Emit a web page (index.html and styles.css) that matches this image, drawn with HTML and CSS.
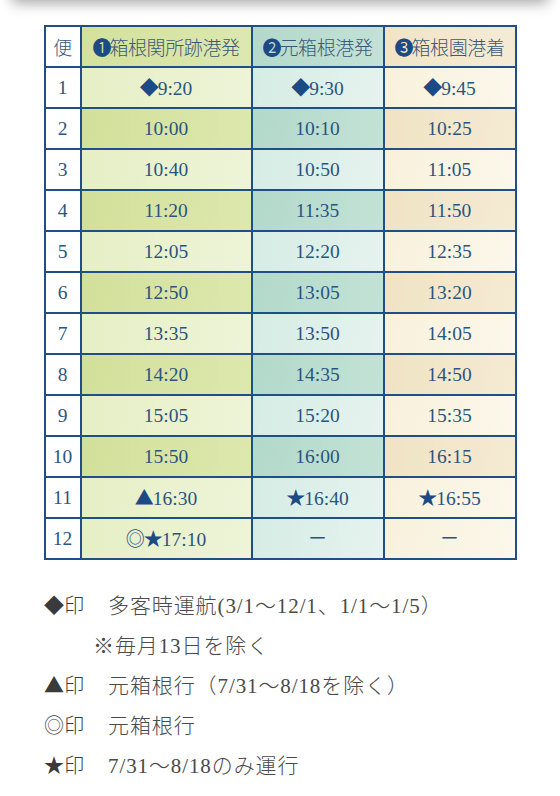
FILE: index.html
```html
<!DOCTYPE html>
<html lang="ja">
<head>
<meta charset="utf-8">
<title>時刻表</title>
<link rel="stylesheet" href="styles.css">
</head>
<body>
<div class="topshade"></div>
<main class="page">
  <table class="timetable">
    <colgroup>
      <col class="c-no"><col class="c-a"><col class="c-b"><col class="c-c">
    </colgroup>
    <thead>
      <tr>
        <th class="no">便</th>
        <th class="a"><span class="num">❶</span>箱根関所跡港発</th>
        <th class="b"><span class="num">❷</span>元箱根港発</th>
        <th class="c"><span class="num">❸</span>箱根園港着</th>
      </tr>
    </thead>
    <tbody>
      <tr class="odd"><td class="no">1</td><td class="a"><span class="sym">◆</span>9:20</td><td class="b"><span class="sym">◆</span>9:30</td><td class="c"><span class="sym">◆</span>9:45</td></tr>
      <tr class="even"><td class="no">2</td><td class="a">10:00</td><td class="b">10:10</td><td class="c">10:25</td></tr>
      <tr class="odd"><td class="no">3</td><td class="a">10:40</td><td class="b">10:50</td><td class="c">11:05</td></tr>
      <tr class="even"><td class="no">4</td><td class="a">11:20</td><td class="b">11:35</td><td class="c">11:50</td></tr>
      <tr class="odd"><td class="no">5</td><td class="a">12:05</td><td class="b">12:20</td><td class="c">12:35</td></tr>
      <tr class="even"><td class="no">6</td><td class="a">12:50</td><td class="b">13:05</td><td class="c">13:20</td></tr>
      <tr class="odd"><td class="no">7</td><td class="a">13:35</td><td class="b">13:50</td><td class="c">14:05</td></tr>
      <tr class="even"><td class="no">8</td><td class="a">14:20</td><td class="b">14:35</td><td class="c">14:50</td></tr>
      <tr class="odd"><td class="no">9</td><td class="a">15:05</td><td class="b">15:20</td><td class="c">15:35</td></tr>
      <tr class="even"><td class="no">10</td><td class="a">15:50</td><td class="b">16:00</td><td class="c">16:15</td></tr>
      <tr class="odd"><td class="no">11</td><td class="a"><span class="sym">▲</span>16:30</td><td class="b"><span class="sym">★</span>16:40</td><td class="c"><span class="sym">★</span>16:55</td></tr>
      <tr class="odd"><td class="no">12</td><td class="a"><span class="sym">◎★</span>17:10</td><td class="b"><span class="dash">ー</span></td><td class="c"><span class="dash">ー</span></td></tr>
    </tbody>
  </table>

  <ul class="notes">
    <li class="note"><span class="mark">◆印</span><span class="desc">多客時運航(3/1～12/1、1/1～1/5）</span></li>
    <li class="note sub"><span class="desc">※毎月13日を除く</span></li>
    <li class="note"><span class="mark">▲印</span><span class="desc">元箱根行（7/31～8/18を除く）</span></li>
    <li class="note"><span class="mark">◎印</span><span class="desc">元箱根行</span></li>
    <li class="note"><span class="mark">★印</span><span class="desc">7/31～8/18のみ運行</span></li>
  </ul>
</main>
</body>
</html>
```

FILE: styles.css
```css
html, body {
  margin: 0;
  padding: 0;
  background: #ffffff;
}

body {
  font-family: "Liberation Serif", "Noto Sans CJK JP", serif;
  color: #444444;
}

.topshade {
  position: fixed;
  top: -24px;
  left: 12px;
  right: 12px;
  height: 24px;
  box-shadow: 0 3px 14px rgba(0, 0, 0, 0.36);
  background: #ffffff;
}

.page {
  padding-top: 25px;
}

.timetable {
  margin: 0 auto;
  width: 471px;
  table-layout: fixed;
  border-collapse: collapse;
  border: 2px solid #1f4f86;
}

.c-no { width: 36px; }
.c-a { width: 171px; }
.c-b { width: 132px; }
.c-c { width: 132px; }

.timetable th,
.timetable td {
  border: 2px solid #1f4f86;
  height: 39px;
  padding: 0;
  text-align: center;
  vertical-align: middle;
  font-size: 19.5px;
  font-weight: 400;
  color: #2a5480;
  line-height: 1;
}

.timetable th {
  font-family: "Noto Sans CJK JP", sans-serif;
  font-weight: 300;
  font-size: 19px;
  color: #3b5877;
  letter-spacing: -0.4px;
}

.timetable th.no {
  background: #ffffff;
}

.timetable .num {
  font-family: "Noto Sans CJK JP", sans-serif;
  font-weight: 400;
  color: #1b4a85;
  font-size: 19px;
  letter-spacing: -2px;
}

.timetable .sym {
  font-family: "Noto Sans CJK JP", sans-serif;
  color: #1b4a85;
  font-size: 19px;
  letter-spacing: -1px;
}

.timetable .dash {
  font-family: "Noto Sans CJK JP", sans-serif;
  font-weight: 400;
  font-size: 18px;
  color: #2a5480;
}

.timetable td.no {
  background: #ffffff;
  color: #2d5580;
}

.timetable th.a { background: linear-gradient(100deg, #d3e19c, #dce8b0); }
.timetable th.b { background: linear-gradient(100deg, #b3d9cb, #c4e2d7); }
.timetable th.c { background: linear-gradient(100deg, #f1e4c6, #f5ebd5); }

.even .a { background: linear-gradient(100deg, #d2e09a, #dde8ae); }
.even .b { background: linear-gradient(100deg, #b2d9ca, #c3e2d6); }
.even .c { background: linear-gradient(100deg, #f0e3c4, #f5ebd4); }

.odd .a { background: linear-gradient(100deg, #e6efc5, #eef4d8); }
.odd .b { background: linear-gradient(100deg, #d5ece4, #e6f3ee); }
.odd .c { background: linear-gradient(100deg, #f8f1dc, #fbf7ea); }

.notes {
  list-style: none;
  margin: 24px 0 0 44px;
  padding: 0;
  font-family: "Liberation Serif", "Noto Sans CJK JP", serif;
  font-size: 21px;
  color: #4a4a4a;
}

.note {
  display: flex;
  align-items: center;
  height: 40px;
}

.note .mark {
  width: 64px;
  flex: none;
  color: #3a3a3a;
  font-family: "Noto Sans CJK JP", sans-serif;
  font-weight: 300;
  font-size: 20px;
  letter-spacing: 0.3px;
}

.note .desc {
  font-weight: 300;
  letter-spacing: 0.9px;
}

.note.sub {
  padding-left: 49px;
}
```
